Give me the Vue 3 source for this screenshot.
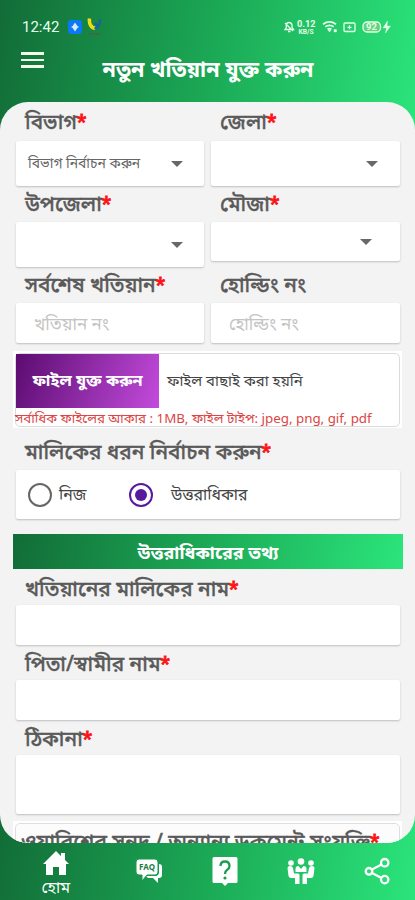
<template>
  <div class="screen">
    <header class="header">
      <div class="status">
        <span class="clock">12:42</span>
        <svg class="app-icon" viewBox="0 0 14 14">
          <rect width="14" height="14" rx="3" fill="#0b79f5" />
          <path d="M7 2.500 10 7 7 11.500 4 7z" fill="#d8ecff" />
          <path d="M3.500 7h7" stroke="#d8ecff" stroke-width="1.200" />
        </svg>
        <svg class="call-icon" viewBox="0 0 16 20">
          <path d="M2.500 1.500Q1.500 10 8.500 11.500" fill="none" stroke="#f0dc14" stroke-width="3.500" />
          <path d="M7.500 11.500Q13 11 13 2M10 9l-2-3" fill="none" stroke="#17659a" stroke-width="2.500" />
          <path d="M2 17h12" stroke="#476342" stroke-width="2" stroke-dasharray="2 1" />
        </svg>
        <span class="spacer"></span>
        <svg class="status-icons" viewBox="0 0 114 16">
          <g fill="none" stroke="#e4ffe9" stroke-width="1.300">
            <path d="M0 10.500h8.500L7 8.500V6q-.5-2.500-3-2.500T1.300 6v2.500zM3 12.500h2.500M0 4l8 8" />
            <path d="M38 5.200q6.500-4.500 13 0M40.300 7.800q4.200-3 8.400 0M42.500 10.400q2-1.500 4 0" stroke-width="1.800" />
            <rect x="59" y="4" width="11" height="8.500" rx="1" />
            <path d="M62.500 8.300h4M64.500 6.300v4" />
            <rect x="78" y="3" width="17.500" height="10" rx="4" fill="#62d27c" />
          </g>
          <path d="M43 11h3l-1.500 2zM49 10.500h2.500v2.500H49zM102.500 2 98 9h3.500l-1 5 5-7H102z" fill="#e4ffe9" stroke="#e4ffe9" stroke-width=".4" />
          <g fill="#e4ffe9" class="status-text">
            <text x="12" y="8" font-size="9.500" textLength="18.500" lengthAdjust="spacingAndGlyphs">0.12</text>
            <text x="13.500" y="14.500" font-size="7" textLength="15" lengthAdjust="spacingAndGlyphs">KB/S</text>
            <text x="81" y="11.200" font-size="8.500" textLength="11" lengthAdjust="spacingAndGlyphs">92</text>
          </g>
        </svg>
      </div>
      <div class="title-bar">
        <button class="menu" aria-label="মেনু"><i></i><i></i><i></i></button>
        <h1>নতুন খতিয়ান যুক্ত করুন</h1>
      </div>
    </header>

    <main class="panel">
      <div class="grid">
        <div v-for="field in selects" :key="field.label" class="field" :class="field.row">
          <label>{{ field.label }}<b>*</b></label>
          <div class="box select">
            <span>{{ field.value }}</span>
            <i class="caret"></i>
          </div>
        </div>
        <div v-for="field in inputs" :key="field.label" class="field third">
          <label>{{ field.label }}<b v-if="field.required">*</b></label>
          <input v-model="field.value" class="box" type="text" :placeholder="field.hint" />
        </div>
      </div>

      <section class="file-wrap">
        <div class="file">
          <div class="file-row">
            <button class="file-button">ফাইল যুক্ত করুন</button>
            <span>ফাইল বাছাই করা হয়নি</span>
          </div>
          <p>সর্বাধিক ফাইলের আকার : 1MB, ফাইল টাইপ: jpeg, png, gif, pdf</p>
        </div>
      </section>

      <div class="owner-type">
        <label>মালিকের ধরন নির্বাচন করুন<b>*</b></label>
        <div class="box radios">
          <div
            v-for="option in ownerTypes"
            :key="option"
            class="radio"
            :class="{ checked: ownerType == option }"
            @click="ownerType = option"
          >
            <i></i><span>{{ option }}</span>
          </div>
        </div>
      </div>

      <h2>উত্তরাধিকারের তথ্য</h2>

      <div class="details">
        <div v-for="field in details" :key="field.label" class="field" :class="field.size">
          <label>{{ field.label }}<b>*</b></label>
          <textarea v-model="field.value" class="box"></textarea>
        </div>
      </div>

      <div class="document">
        <div class="document-box">
          <label>ওয়ারিশের সনদ / অন্যান্য ডকুমেন্ট সংযুক্তি<b>*</b></label>
        </div>
      </div>
    </main>

    <nav>
      <a class="home">
        <svg viewBox="0 0 28 26">
          <path d="M14 1 1 14h3v11h7v-8h6v8h7V14h3l-4-4V3h-4v3z" fill="white" />
        </svg>
        <span>হোম</span>
      </a>
      <a>
        <svg viewBox="0 0 28 28">
          <path d="M24 7q3 0 3 3v8q0 3-3 3h-1v5l-5-5h-5l-2-2h9q4 0 4-4z" fill="white" />
          <path d="M4 2h16q3 0 3 3v10q0 3-3 3h-8l-5 6v-6H4q-3 0-3-3V5q0-3 3-3z" fill="white" stroke="#189a4e" />
          <text x="4" y="12.500" textLength="16" font-size="8" fill="#167f40" font-weight="bold">FAQ</text>
        </svg>
      </a>
      <a>
        <svg viewBox="0 0 28 30">
          <path d="M3 1h22q1.500 0 1.500 1.500v23Q26.500 27 25 27h-8l-3 3-3-3H3q-1.500 0-1.500-1.500v-23Q1.500 1 3 1z" fill="white" />
          <path d="M9.500 10q0-4.500 4.500-4.500t4.500 4.500q0 2.500-2.500 4-2 1.300-2 4" fill="none" stroke="#199d50" stroke-width="2.300" />
          <circle cx="14" cy="22" r="1.600" fill="#199d50" />
        </svg>
      </a>
      <a>
        <svg viewBox="0 0 28 28">
          <g fill="white">
            <circle cx="4" cy="6" r="2.800" />
            <circle cx="24" cy="6" r="2.800" />
            <circle cx="14" cy="4.500" r="3.300" />
            <path d="M8.500 15v-3q0-3 3-3l2.500 3 2.500-3q3 0 3 3v3z" />
            <path d="M.5 11q0-2 2.500-2t3 2l1 5.500h4q1.500 0 1.500 1.500v9H8v-6H4q-2 0-2.500-2zM27.500 11q0-2-2.500-2t-3 2l-1 5.500h-4q-1.500 0-1.500 1.500v9H20v-6h4q2 0 2.500-2z" />
          </g>
        </svg>
      </a>
      <a>
        <svg viewBox="0 0 28 28">
          <g fill="none" stroke="white" stroke-width="2.300">
            <path d="m9 12.500 9.500-5M9 16l9.500 5" />
            <circle cx="6" cy="14.300" r="3.300" />
            <circle cx="21.700" cy="5.700" r="3.700" />
            <circle cx="21.700" cy="22.600" r="3.700" />
          </g>
        </svg>
      </a>
    </nav>
  </div>
</template>

<script setup>
import { ref } from "vue";

const selects = ref([
  { label: "বিভাগ", value: "বিভাগ নির্বাচন করুন", row: "first" },
  { label: "জেলা", value: "", row: "first" },
  { label: "উপজেলা", value: "", row: "second" },
  { label: "মৌজা", value: "", row: "second short" },
]);

const inputs = ref([
  { label: "সর্বশেষ খতিয়ান", hint: "খতিয়ান নং", value: "", required: true },
  { label: "হোল্ডিং নং", hint: "হোল্ডিং নং", value: "", required: false },
]);

const ownerTypes = ["নিজ", "উত্তরাধিকার"];
const ownerType = ref("উত্তরাধিকার");

const details = ref([
  { label: "খতিয়ানের মালিকের নাম", value: "", size: "" },
  { label: "পিতা/স্বামীর নাম", value: "", size: "" },
  { label: "ঠিকানা", value: "", size: "tall" },
]);
</script>

<style>
body {
  margin: 0;
}
</style>

<style scoped>
* {
  box-sizing: border-box;
}

.screen {
  width: 415px;
  height: 900px;
  display: flex;
  flex-direction: column;
  overflow: hidden;
  font-family: "Noto Sans", "Noto Sans Bengali", Roboto, sans-serif;
  background:
    linear-gradient(100deg, #126c37, #1ba855 50%, #2be57b) top / 100% 135px no-repeat,
    linear-gradient(100deg, #126c37, #1ba855 50%, #2be57b) bottom / 100% 90px no-repeat;
}

.header {
  height: 102px;
  flex: none;
  color: white;
}

.status {
  display: flex;
  align-items: center;
  height: 40px;
  padding: 14px 16px 0 22px;
}

.clock {
  width: 46px;
  font: 15px Roboto, sans-serif;
  color: #e4ffe9;
}

.app-icon {
  width: 14px;
  height: 14px;
}

.call-icon {
  width: 16px;
  height: 20px;
  margin-left: 5px;
}

.spacer {
  flex: 1;
}

.status-icons {
  width: 114px;
  height: 16px;
  overflow: visible;
}

.status-text {
  font-family: Roboto, sans-serif;
  font-weight: bold;
}

.title-bar {
  display: flex;
  height: 62px;
  padding: 12px 20px 0 21px;
}

.menu {
  display: flex;
  flex-direction: column;
  gap: 4px;
  width: 24px;
  height: 17px;
  padding: 0;
  border: none;
  background: none;
}

.menu i {
  width: 23px;
  height: 2.500px;
  background: #f2ffe9;
}

h1 {
  flex: 1;
  margin: 3px 24px 0 0;
  font-size: 21.6px;
  line-height: 28px;
  font-weight: bold;
  text-align: center;
  white-space: nowrap;
}

.panel {
  height: 741px;
  flex: none;
  overflow: hidden;
  border-radius: 28px;
  background: #f3f3f3;
}

.grid {
  display: grid;
  grid-template-columns: 188px 189px;
  column-gap: 7px;
  padding: 0 15px 0 16px;
}

label {
  display: block;
  padding-left: 9px;
  font-size: 20.8px;
  font-weight: 500;
  color: #5a5a5a;
  white-space: nowrap;
  -webkit-text-stroke: 0.35px #5a5a5a;
}

label b {
  color: #fb1515;
  font-family: Roboto, sans-serif;
  font-size: 20px;
  font-weight: bold;
  -webkit-text-stroke: 0.8px #fb1515;
}

.box {
  display: block;
  width: 100%;
  margin: 0;
  padding: 0;
  border: none;
  border-radius: 2px;
  background: white;
  box-shadow: 0 1px 2px rgba(0, 0, 0, 0.22);
  font-family: inherit;
  outline: none;
  resize: none;
}

.first label {
  height: 39px;
  line-height: 39px;
}

.second label,
.third label {
  height: 36px;
  line-height: 34px;
}

.select {
  display: flex;
  align-items: center;
  height: 45px;
  padding: 0 21px 0 12px;
  font-size: 13.9px;
  color: #666;
}

.select span {
  flex: 1;
  white-space: nowrap;
}

.caret {
  border: 6px solid transparent;
  border-top-color: #686868;
  border-bottom: none;
}

.field:nth-child(2) .caret {
  margin-right: 1px;
}

.short .select {
  height: 39px;
  padding-right: 28px;
}

input.box {
  height: 40px;
  padding-left: 18px;
  font-size: 17px;
}

input::placeholder {
  color: #c4c4c4;
}

.file-wrap {
  margin: 8px 13px 0;
  padding: 2px 2px 1px;
  background: white;
}

.file {
  height: 74px;
  border: 1px solid #d8dcdc;
  border-radius: 5px;
  background: white;
}

.file-row {
  display: flex;
  align-items: center;
  height: 54px;
  font-size: 14.9px;
  color: #444;
  white-space: nowrap;
}

.file-button {
  width: 143px;
  height: 54px;
  margin-right: 8px;
  padding: 0;
  border: none;
  background: linear-gradient(110deg, #5b0c70, #c34bdc);
  color: white;
  font-family: inherit;
  font-size: 16.3px;
  font-weight: bold;
}

.file p {
  margin: 0 0 0 -1px;
  font-size: 13.35px;
  line-height: 20px;
  color: #dc4545;
  white-space: nowrap;
}

.owner-type,
.details {
  padding: 0 15px 0 16px;
}

.owner-type label {
  height: 42px;
  line-height: 47px;
}

.radios {
  display: flex;
  align-items: center;
  height: 49px;
  padding-left: 12px;
}

.radio {
  display: flex;
  align-items: center;
  min-width: 101px;
  font-size: 15.9px;
  color: #444;
  white-space: nowrap;
}

.radio i {
  display: flex;
  flex: none;
  width: 24px;
  height: 24px;
  margin-right: 7px;
  border: 2px solid #666;
  border-radius: 50%;
}

.radio.checked i {
  margin-right: 18px;
  padding: 4px;
  border-color: #5a189c;
}

.radio.checked i::before {
  content: "";
  flex: 1;
  border-radius: 50%;
  background: #5a189c;
}

h2 {
  height: 35px;
  margin: 15px 12px 0 13px;
  background: linear-gradient(100deg, #126c37, #1ba855 48%, #2be57b);
  color: white;
  font-size: 17.9px;
  line-height: 36px;
  text-align: center;
}

.details label {
  height: 36px;
  line-height: 38px;
}

.details .field + .field label {
  height: 35px;
  line-height: 36px;
}

.details .box {
  height: 40px;
}

.details .tall .box {
  height: 59px;
}

.document {
  margin: 7px 13px 0;
  padding: 2px 2px 0;
  background: white;
}

.document-box {
  height: 60px;
  border: 1px solid #dedede;
  border-radius: 5px;
  background: #fcfcfc;
}

.document-box label {
  padding-left: 5px;
  line-height: 35px;
}

nav {
  display: flex;
  flex: 1;
  padding: 6px 0 0 16px;
}

nav a {
  display: flex;
  flex-direction: column;
  align-items: center;
  width: 76.5px;
  padding-top: 7px;
  color: white;
}

nav svg {
  width: 28px;
  height: 30px;
}

nav .home {
  width: 80px;
  margin-right: 15px;
  padding-top: 1px;
}

nav .home svg {
  height: 26px;
}

nav .home span {
  font-size: 16px;
  line-height: 22px;
}
</style>
